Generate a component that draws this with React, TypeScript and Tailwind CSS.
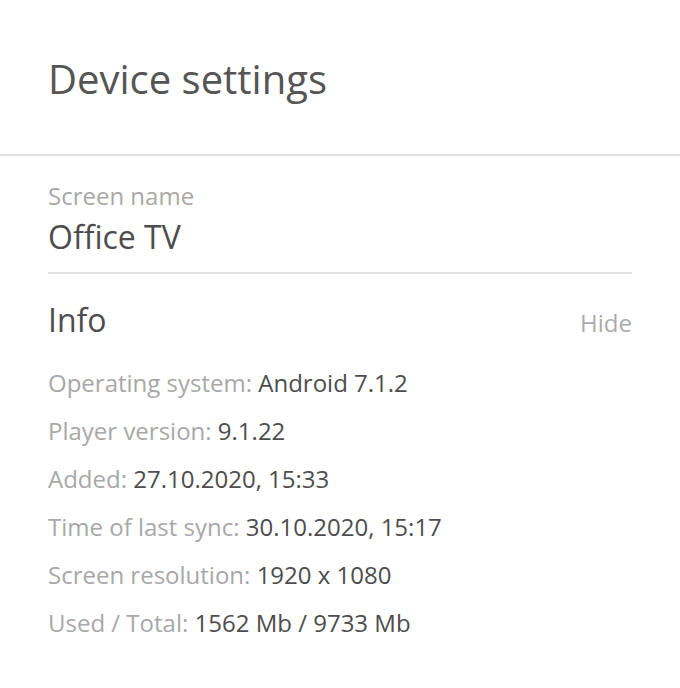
import React from 'react';

const infoRows = [
  { label: 'Operating system:', value: 'Android 7.1.2' },
  { label: 'Player version:', value: '9.1.22' },
  { label: 'Added:', value: '27.10.2020, 15:33' },
  { label: 'Time of last sync:', value: '30.10.2020, 15:17' },
  { label: 'Screen resolution:', value: '1920 x 1080' },
  { label: 'Used / Total:', value: '1562 Mb / 9733 Mb' },
];

export default function App() {
  return (
    <div
      className="w-[680px] h-[688px] bg-white overflow-hidden"
      style={{ fontFamily: '"Open Sans", "Noto Sans", sans-serif' }}
    >
      <header className="h-[156px] px-12 pt-[3px] flex items-center border-b-2 border-[#e0e0e0]">
        <h1 className="text-[40px] leading-[48px] text-[#555555] font-normal">Device settings</h1>
      </header>

      <div className="px-12">
        <div className="pt-[25px] pb-[15px] border-b-2 border-[#e0e0e0]">
          <div className="text-[24px] leading-[30px] text-[#a8a8a8]">Screen name</div>
          <div className="mt-[6px] text-[32px] leading-[40px] text-[#4d4d4d]">Office TV</div>
        </div>

        <div className="mt-[26px] flex items-baseline justify-between">
          <h2 className="text-[32px] leading-[40px] text-[#4d4d4d] font-normal">Info</h2>
          <button className="text-[24px] leading-[30px] text-[#ababab]">Hide</button>
        </div>

        <ul className="mt-[19px]">
          {infoRows.map((row) => (
            <li key={row.label} className="text-[24px] leading-[48px]">
              <span className="text-[#a8a8a8]">{row.label}</span>{' '}
              <span className="text-[#4d4d4d]">{row.value}</span>
            </li>
          ))}
        </ul>
      </div>
    </div>
  );
}
